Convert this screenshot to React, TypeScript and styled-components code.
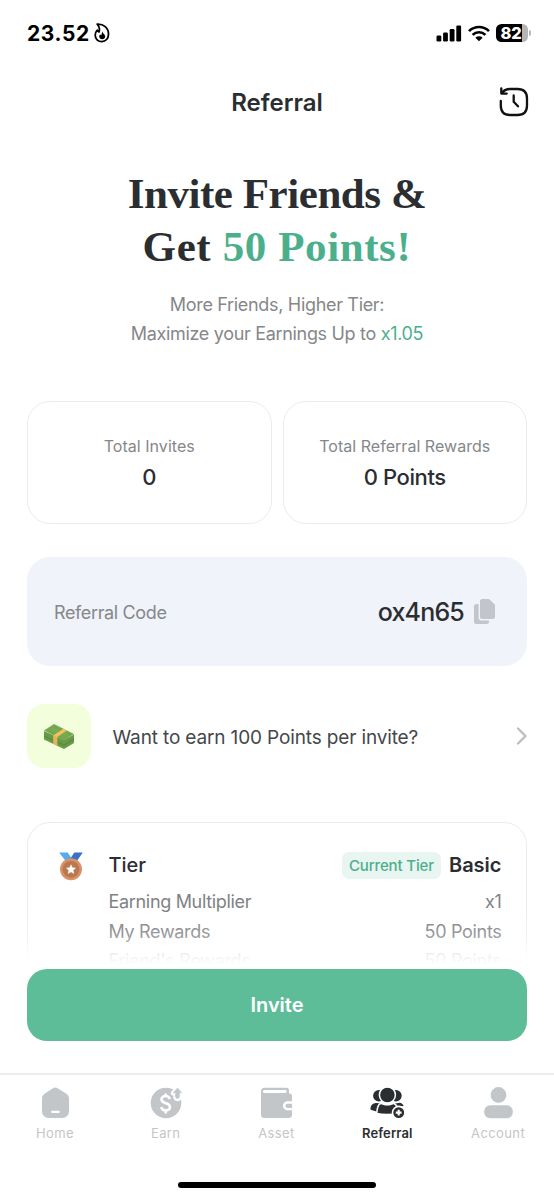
import React from "react";
import styled, { createGlobalStyle, css } from "styled-components";

const GlobalStyle = createGlobalStyle`
  *, *::before, *::after { box-sizing: border-box; }
  body { margin: 0; background: #fff; font-family: Inter, "Liberation Sans", sans-serif; }
`;

const Screen = styled.div`
  display: flex;
  flex-direction: column;
  width: 554px;
  height: 1199px;
  overflow: hidden;
  background: #fff;
  color: #2b2e31;
  white-space: nowrap;
`;

const StatusBar = styled.div`
  display: flex;
  flex: none;
  align-items: center;
  justify-content: space-between;
  height: 66px;
  padding: 0 26px 0 27px;
`;

const StatusGroup = styled.div<{ $gap: number }>`
  display: flex;
  align-items: center;
  gap: ${(p) => p.$gap}px;
`;

const Clock = styled.span`
  font-size: 21px;
  font-weight: 700;
  letter-spacing: 0.6px;
  color: #000;
`;

const Header = styled.header`
  display: grid;
  flex: none;
  grid-template-columns: 1fr auto 1fr;
  align-items: center;
  height: 72px;
  padding: 0 25px;
`;

const HeaderTitle = styled.h1`
  grid-column: 2;
  margin: 0;
  font-size: 24px;
  font-weight: 600;
`;

const HistoryButton = styled.button`
  justify-self: end;
  display: flex;
  padding: 0;
  border: 0;
  background: none;
`;

const Content = styled.main`
  display: flex;
  flex: none;
  flex-direction: column;
  height: 831px;
  padding: 29px 27px 0;
  overflow: hidden;
`;

const Headline = styled.h2`
  margin: 0;
  font-family: "Liberation Serif", serif;
  font-size: 43px;
  font-weight: 700;
  line-height: 53px;
  text-align: center;
`;

const HeadlineRow = styled.span<{ $spacing: number }>`
  display: block;
  letter-spacing: ${(p) => p.$spacing}px;
`;

const Accent = styled.span`
  color: #4caf8c;
`;

const Subtitle = styled.p`
  margin: 17px 0 0;
  font-size: 18px;
  line-height: 29px;
  letter-spacing: -0.32px;
  text-align: center;
  color: #85878a;
`;

const Stats = styled.div`
  display: grid;
  flex: none;
  grid-template-columns: 1fr 1fr;
  gap: 11px;
  height: 123px;
  margin-top: 53px;
`;

const StatCard = styled.div`
  display: flex;
  flex-direction: column;
  align-items: center;
  padding-top: 32px;
  border: 1.5px solid #ebebf1;
  border-radius: 23px;
`;

const StatLabel = styled.span`
  font-size: 16px;
  line-height: 24px;
  letter-spacing: 0.03px;
  color: #85878a;
`;

const StatValue = styled.span`
  margin-top: 3px;
  font-size: 22px;
  font-weight: 500;
  line-height: 33px;
  letter-spacing: -0.4px;
`;

const CodeCard = styled.div`
  display: flex;
  flex: none;
  align-items: center;
  height: 109px;
  margin-top: 33px;
  padding: 0 32px 0 27px;
  border-radius: 23px;
  background: #f0f3f9;
`;

const CodeLabel = styled.span`
  flex: 1;
  padding-top: 1px;
  font-size: 18px;
  letter-spacing: -0.36px;
  color: #85878a;
`;

const Code = styled.span`
  margin-right: 10px;
  padding-top: 1px;
  font-size: 25px;
  font-weight: 500;
  letter-spacing: -0.8px;
`;

const Promo = styled.div`
  display: flex;
  flex: none;
  align-items: center;
  height: 64px;
  margin-top: 38px;
`;

const PromoTile = styled.div`
  display: flex;
  align-items: center;
  justify-content: center;
  width: 64px;
  height: 64px;
  border-radius: 17px;
  background: #f3fedc;
`;

const PromoText = styled.span`
  flex: 1;
  margin-left: 21.5px;
  padding-top: 2px;
  font-size: 19px;
  letter-spacing: -0.14px;
  color: #44474a;
`;

const TierCard = styled.section`
  display: flex;
  flex: none;
  height: 260px;
  margin-top: 54px;
  padding: 25px 24.5px 0 28.5px;
  border: 1.5px solid #ebebf1;
  border-radius: 23px;
`;

const MedalSlot = styled.div`
  width: 52px;
  padding-top: 3px;
`;

const TierRows = styled.div`
  flex: 1;
`;

const TierHead = styled.div`
  display: flex;
  align-items: center;
  height: 34px;
  margin-bottom: 3px;
  font-size: 20px;
`;

const TierTitle = styled.span`
  flex: 1;
  font-weight: 500;
`;

const Badge = styled.span`
  height: 27px;
  margin-right: 8px;
  padding: 0 7px;
  border-radius: 7px;
  background: #e8f5f1;
  font-size: 15px;
  font-weight: 500;
  line-height: 27px;
  letter-spacing: -0.14px;
  color: #4caf8c;
`;

const TierName = styled.span`
  font-weight: 600;
`;

const TierRow = styled.div`
  display: flex;
  justify-content: space-between;
  height: 29.5px;
  padding-top: 2px;
  font-size: 18px;
  line-height: 29px;
  letter-spacing: -0.32px;
  color: #808285;
`;

const ActionBar = styled.div`
  position: relative;
  flex: none;
  height: 104px;
  padding: 0 27px;
  background: #fff;

  &::before {
    content: "";
    position: absolute;
    right: 0;
    bottom: 100%;
    left: 0;
    height: 56px;
    background: linear-gradient(to bottom, rgba(255, 255, 255, 0) 0%, rgba(255, 255, 255, 0.2) 40%, rgba(255, 255, 255, 0.85) 72%, #fff 92%);
  }
`;

const InviteButton = styled.button`
  width: 100%;
  height: 72px;
  padding: 0;
  border: 0;
  border-radius: 20px;
  background: #5ebd99;
  font: 600 20px Inter, "Liberation Sans", sans-serif;
  color: #fff;
`;

const TabBar = styled.nav`
  display: grid;
  flex: none;
  grid-template-columns: repeat(5, 1fr);
  height: 109px;
  border-top: 2px solid #ececf0;
`;

const Tab = styled.a<{ $active?: boolean }>`
  display: flex;
  flex-direction: column;
  align-items: center;
  padding: 12px 1px 0 0;
  font-size: 13px;
  line-height: 18px;
  letter-spacing: 0.4px;
  color: #c3c6c9;
  ${(p) =>
    p.$active &&
    css`
      font-weight: 600;
      letter-spacing: 0.1px;
      color: #2b2e31;
    `}

  svg {
    display: block;
    margin-bottom: 3px;
  }
`;

const HomeIndicator = styled.div`
  flex: none;
  align-self: center;
  width: 198px;
  height: 6px;
  border-radius: 3px;
  background: #000;
`;

const FlameIcon = () => (
  <svg width="16" height="20" viewBox="0 0 16 20" fill="none">
    <path d="M3.2 1.1C9.6.8 14.5 4.8 14.5 11.2c0 4.3-2.8 7.4-6.7 7.4-3.8 0-6.6-2.7-6.6-6.4 0-2.3.9-3.8 2.1-5 .4 1 .9 1.5 1.7 1.8C6.1 5.7 5.2 3.2 3.2 1.1Z" stroke="#000" strokeWidth="1.8" strokeLinejoin="round" />
    <path d="M8.2 8.3c.1 1.8 3 2.9 3 5.2 0 1.6-1.3 2.7-3 2.7s-3-1.1-3-2.7c0-1 .4-1.7 1-2.3.2.6.5.9 1 1.1.6-1.1.9-2.4 1-4Z" fill="#000" />
  </svg>
);

const SignalIcon = () => (
  <svg width="26" height="17" viewBox="0 0 26 17" fill="#000">
    <rect x="0.5" y="10.5" width="4.8" height="6" rx="1.3" />
    <rect x="7.1" y="7.5" width="4.8" height="9" rx="1.3" />
    <rect x="13.7" y="4" width="4.8" height="12.5" rx="1.3" />
    <rect x="20.3" y="0.5" width="4.8" height="16" rx="1.3" />
  </svg>
);

const WifiIcon = () => (
  <svg width="22" height="17" viewBox="0 0 22 17" fill="none" stroke="#000" strokeWidth="2.7">
    <path d="M1 6.1a14.2 14.2 0 0 1 20 0" />
    <path d="M4.6 9.9a9.1 9.1 0 0 1 12.8 0" />
    <path d="M7.4 12.7a5.1 5.1 0 0 1 7.2 0L11 16.2Z" fill="#000" stroke="none" />
  </svg>
);

const BatteryShape = styled.div`
  position: relative;
  width: 32px;
  height: 18px;
  padding-right: 2px;
  border-radius: 5.5px;
  background: linear-gradient(to right, #000 82%, #b5b5b5 82%);
  font-size: 16.5px;
  font-weight: 800;
  line-height: 18px;
  letter-spacing: -0.3px;
  text-align: center;
  color: #fff;

  &::after {
    content: "";
    position: absolute;
    top: 6px;
    left: 33px;
    width: 2px;
    height: 6px;
    border-radius: 0 2px 2px 0;
    background: #b5b5b5;
  }
`;

const HistoryIcon = () => (
  <svg width="30" height="30" viewBox="0 0 30 30" fill="none" stroke="#111" strokeWidth="2.3" strokeLinecap="round" strokeLinejoin="round">
    <path d="M1.8 14v4.5C1.8 24.5 5 28 11 28h7.500C24.500 28 28 24.500 28 18.500v-7C28 5.500 24.500 2 18.500 2h-7.500C7.500 2 5.200 3.200 3.800 5.400" />
    <path d="M2.300 1.300v5.300h5.400M2.600 6.300l3-3" />
    <path d="M14.700 8.500v6.200l4.300 4.600" />
  </svg>
);

const CopyIcon = () => (
  <svg width="21" height="26" viewBox="0 0 21 26" fill="#c2c5ca">
    <path d="M8.500 0H15l6 5.700V17.500a2.500 2.500 0 0 1-2.500 2.500h-10A2.500 2.500 0 0 1 6 17.500v-15A2.500 2.500 0 0 1 8.500 0Z" />
    <path d="M2.500 5H4.600v14A2.500 2.500 0 0 0 7 21.400H15v1.100A2.500 2.500 0 0 1 12.500 25h-10A2.500 2.500 0 0 1 0 22.500v-15A2.500 2.500 0 0 1 2.500 5Z" />
  </svg>
);

const CashIcon = () => (
  <svg width="32" height="28" viewBox="0 0 32 28">
    <path d="M1 9v8.500L21 27l10-6v-8.500L21 18Z" fill="#689b46" />
    <path d="M1 13.200 21 22.500l10-6v1.200l-10 6L1 14.400Z" fill="#56893f" />
    <path d="M1 8.500 11 2l20 10-10 6.500Z" fill="#77aa51" />
    <path d="M4.500 8.500 11 4.300l16 7.900-6.200 4Z" fill="none" stroke="#6fa34d" strokeWidth=".8" />
    <path d="m10.500 13.200 10-6.400 3.500 1.800-9.800 6.400V23.500l-3.700-1.800Z" fill="#f2bf62" />
    <path d="m10.500 13.200 3.700 1.800v8.500l-3.700-1.800Z" fill="#e8b15a" />
  </svg>
);

const MedalIcon = () => (
  <svg width="28" height="30" viewBox="0 0 28 30">
    <path d="M2.200 1.500h8.500l6 9H9Z" fill="#55abee" />
    <path d="M17.300 1.500h8.500l-6.300 9h-8Z" fill="#3a6fce" />
    <circle cx="14" cy="18.300" r="11" fill="#d99268" />
    <circle cx="14" cy="18.300" r="8.400" fill="#b97850" />
    <path d="m14 13.800 1.300 2.900 3.200.4-2.400 2.200.7 3.200-2.800-1.700-2.800 1.700.7-3.200-2.400-2.200 3.200-.4Z" fill="#fff" stroke="#fff" strokeWidth=".5" />
  </svg>
);

const ChevronIcon = () => (
  <svg width="11" height="18" viewBox="0 0 11 18" fill="none" stroke="#b9bcc0" strokeWidth="2.2" strokeLinecap="round" strokeLinejoin="round">
    <path d="m2 1.500 7.500 7.500-7.500 7.500" />
  </svg>
);

const HomeIcon = () => (
  <svg width="34" height="34" viewBox="0 0 34 34">
    <path d="M14.500 1.500a5 5 0 0 1 5.500 0l8 5A6 6 0 0 1 31 11.700V24.500a6.500 6.500 0 0 1-6.500 6.500H10.500A6.500 6.500 0 0 1 4 24.500V11.700A6 6 0 0 1 6.800 6.500Z" fill="#c3c6c9" />
    <rect x="13.200" y="23.700" width="8.500" height="2.300" rx=".8" fill="#fff" />
  </svg>
);

const EarnIcon = () => (
  <svg width="34" height="34" viewBox="0 0 34 34" fill="none">
    <circle cx="17" cy="16" r="15.300" fill="#c3c6c9" />
    <path d="M28.500 1 33 6.200h-2.500V10a2 2 0 0 1-4 0V6.200H24Z" fill="#c3c6c9" stroke="#fff" strokeWidth="4.500" strokeLinejoin="round" />
    <path d="M28.500 1 32.700 5.800h-2.300V9.500a1.900 1.900 0 0 1-3.800 0V5.800h-2.300Z" fill="#c3c6c9" stroke="#c3c6c9" strokeWidth=".6" strokeLinejoin="round" />
    <path d="M20.800 12c-.7-1.900-2.100-2.900-4.100-2.900-2.600 0-4.200 1.400-4.200 3.500 0 4.800 8.500 2.500 8.500 7.200 0 2.200-1.800 3.600-4.300 3.600-2.300 0-4-1.200-4.500-3.300M16.700 6.500v3M16.700 23V26.500" stroke="#fff" strokeWidth="2.500" />
  </svg>
);

const AssetIcon = () => (
  <svg width="34" height="34" viewBox="0 0 34 34">
    <path d="M5.500.7H27.500a2.500 2.500 0 0 1 2.500 2.500V6.500h.5A2.500 2.500 0 0 1 33 9v18.500a3.500 3.500 0 0 1-3.500 3.500H5.500A3.500 3.500 0 0 1 2 27.500v-23A3.800 3.800 0 0 1 5.500.7Z" fill="#c3c6c9" />
    <rect x="4" y="3" width="23.500" height="2.900" rx="1.200" fill="#fff" />
    <path d="M34 15.500h-5.500a3.300 3.300 0 0 0 0 6.600H34" fill="none" stroke="#fff" strokeWidth="2.400" />
  </svg>
);

const ReferralIcon = () => (
  <svg width="34" height="34" viewBox="0 0 34 34" fill="#2b2e31">
    <circle cx="8.800" cy="8.800" r="5.700" />
    <circle cx="26" cy="8.800" r="5.700" />
    <path d="M5 16.300c1.500-.5 4 .2 6 .2l-3 8.500-7.400-2.300C.2 19.500 1.600 17 5 16.300Z" />
    <path d="M29.500 15.700c2 .1 3.500 1.300 4.200 3.200L27 20l-3-3.500c2 0 4-.8 5.500-.8Z" />
    <path d="M6.800 26.500c.2-4.500 1.300-9.200 4-9.900 1.400-.4 3 1.200 6.500 1.200s5.100-1.600 6.500-1.200c2.700.7 4.200 5.400 4.200 9.900-5 1.400-16 1.400-21.200 0Z" stroke="#fff" strokeWidth="1.600" />
    <circle cx="17.400" cy="8" r="8" stroke="#fff" strokeWidth="1.500" />
    <circle cx="28.700" cy="25.600" r="6.200" stroke="#fff" strokeWidth="1.600" />
    <path d="M28.700 22.700v5.800M25.800 25.600h5.800" stroke="#fff" strokeWidth="2.100" />
  </svg>
);

const AccountIcon = () => (
  <svg width="34" height="34" viewBox="0 0 34 34" fill="#c3c6c9">
    <circle cx="17.500" cy="8" r="7.900" />
    <rect x="3.200" y="18.300" width="28.600" height="13" rx="6" />
  </svg>
);

const tierRows = [
  ["Earning Multiplier", "x1"],
  ["My Rewards", "50 Points"],
  ["Friend's Rewards", "50 Points"],
];

const tabs = [
  { label: "Home", icon: <HomeIcon /> },
  { label: "Earn", icon: <EarnIcon /> },
  { label: "Asset", icon: <AssetIcon /> },
  { label: "Referral", icon: <ReferralIcon />, active: true },
  { label: "Account", icon: <AccountIcon /> },
];

export default function App() {
  return (
    <>
      <GlobalStyle />
      <Screen>
        <StatusBar>
          <StatusGroup $gap={4}>
            <Clock>23.52</Clock>
            <FlameIcon />
          </StatusGroup>
          <StatusGroup $gap={6}>
            <SignalIcon />
            <WifiIcon />
            <BatteryShape>82</BatteryShape>
          </StatusGroup>
        </StatusBar>
        <Header>
          <HeaderTitle>Referral</HeaderTitle>
          <HistoryButton aria-label="History">
            <HistoryIcon />
          </HistoryButton>
        </Header>
        <Content>
          <Headline>
            <HeadlineRow $spacing={-0.45}>Invite Friends &amp;</HeadlineRow>
            <HeadlineRow $spacing={0.6}>
              Get <Accent>50 Points!</Accent>
            </HeadlineRow>
          </Headline>
          <Subtitle>
            More Friends, Higher Tier:
            <br />
            Maximize your Earnings Up to <Accent>x1.05</Accent>
          </Subtitle>
          <Stats>
            <StatCard>
              <StatLabel>Total Invites</StatLabel>
              <StatValue>0</StatValue>
            </StatCard>
            <StatCard>
              <StatLabel>Total Referral Rewards</StatLabel>
              <StatValue>0 Points</StatValue>
            </StatCard>
          </Stats>
          <CodeCard>
            <CodeLabel>Referral Code</CodeLabel>
            <Code>ox4n65</Code>
            <CopyIcon />
          </CodeCard>
          <Promo>
            <PromoTile>
              <CashIcon />
            </PromoTile>
            <PromoText>Want to earn 100 Points per invite?</PromoText>
            <ChevronIcon />
          </Promo>
          <TierCard>
            <MedalSlot>
              <MedalIcon />
            </MedalSlot>
            <TierRows>
              <TierHead>
                <TierTitle>Tier</TierTitle>
                <Badge>Current Tier</Badge>
                <TierName>Basic</TierName>
              </TierHead>
              {tierRows.map(([label, value]) => (
                <TierRow key={label}>
                  <span>{label}</span>
                  <span>{value}</span>
                </TierRow>
              ))}
            </TierRows>
          </TierCard>
        </Content>
        <ActionBar>
          <InviteButton>Invite</InviteButton>
        </ActionBar>
        <TabBar>
          {tabs.map((tab) => (
            <Tab key={tab.label} $active={tab.active}>
              {tab.icon}
              {tab.label}
            </Tab>
          ))}
        </TabBar>
        <HomeIndicator />
      </Screen>
    </>
  );
}
